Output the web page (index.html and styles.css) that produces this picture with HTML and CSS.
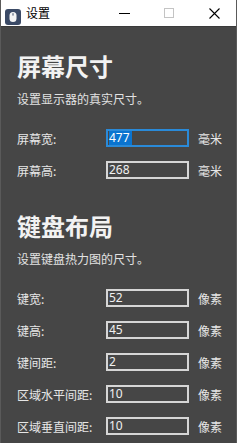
FILE: index.html
```html
<!DOCTYPE html>
<html lang="zh-CN">
<head>
    <meta charset="UTF-8">
    <meta name="viewport" content="width=device-width, initial-scale=1.0">
    <title>设置</title>
    <link rel="stylesheet" href="styles.css">
</head>
<body>
    <div class="window">
        <!-- title bar -->
        <div class="titlebar">
            <div class="app-icon">
                <svg width="16" height="16" viewBox="0 0 16 16">
                    <rect x="0" y="0" width="16" height="16" rx="3" fill="#3b4a66"/>
                    <rect x="4.5" y="3" width="7" height="10" rx="3.5" fill="#f4f4f4"/>
                    <line x1="8" y1="4.2" x2="8" y2="6.6" stroke="#3b4a66" stroke-width="1"/>
                </svg>
            </div>
            <div class="title-text">设置</div>
            <div class="caption-btns">
                <div class="cap minimize">
                    <svg width="11" height="11" viewBox="0 0 11 11"><line x1="0" y1="5.5" x2="11" y2="5.5" stroke="#000" stroke-width="1"/></svg>
                </div>
                <div class="cap maximize">
                    <svg width="11" height="11" viewBox="0 0 11 11"><rect x="0.5" y="0.5" width="9" height="9" fill="none" stroke="#c4c4c4" stroke-width="1"/></svg>
                </div>
                <div class="cap close">
                    <svg width="11" height="11" viewBox="0 0 11 11"><path d="M0.5 0.5 L10.5 10.5 M10.5 0.5 L0.5 10.5" stroke="#000" stroke-width="1.1"/></svg>
                </div>
            </div>
        </div>

        <div class="content">
            <div class="section">
                <div class="heading">屏幕尺寸</div>
                <div class="subtitle">设置显示器的真实尺寸。</div>
                <div class="rows">
                    <div class="row">
                        <div class="label">屏幕宽:</div>
                        <div class="field focused"><span class="sel">477</span></div>
                        <div class="unit">毫米</div>
                    </div>
                    <div class="row">
                        <div class="label">屏幕高:</div>
                        <div class="field">268</div>
                        <div class="unit">毫米</div>
                    </div>
                </div>
            </div>

            <div class="section">
                <div class="heading">键盘布局</div>
                <div class="subtitle">设置键盘热力图的尺寸。</div>
                <div class="rows">
                    <div class="row">
                        <div class="label">键宽:</div>
                        <div class="field">52</div>
                        <div class="unit">像素</div>
                    </div>
                    <div class="row">
                        <div class="label">键高:</div>
                        <div class="field">45</div>
                        <div class="unit">像素</div>
                    </div>
                    <div class="row">
                        <div class="label">键间距:</div>
                        <div class="field">2</div>
                        <div class="unit">像素</div>
                    </div>
                    <div class="row">
                        <div class="label">区域水平间距:</div>
                        <div class="field">10</div>
                        <div class="unit">像素</div>
                    </div>
                    <div class="row">
                        <div class="label">区域垂直间距:</div>
                        <div class="field">10</div>
                        <div class="unit">像素</div>
                    </div>
                </div>
            </div>
        </div>
    </div>
</body>
</html>
```

FILE: styles.css
```css
body {
    margin: 0;
    font-family: "Noto Sans CJK SC", "Noto Sans", sans-serif;
    background-color: #464646;
}

.window {
    width: 237px;
    height: 443px;
    box-sizing: border-box;
    border-left: 1px solid #5a5a5a;
    border-right: 1px solid #5a5a5a;
    background-color: #464646;
    overflow: hidden;
}

/* title bar */
.titlebar {
    height: 26px;
    background-color: #fff;
    display: flex;
    align-items: center;
    border-bottom: 1px solid #3a3a3a;
}

.app-icon {
    width: 16px;
    height: 16px;
    margin-left: 4px;
    margin-top: 1px;
}

.title-text {
    font-size: 12px;
    color: #000;
    margin-left: 5px;
    line-height: 16px;
}

.caption-btns {
    display: flex;
    margin-left: auto;
    height: 26px;
}

.cap {
    width: 45px;
    display: flex;
    align-items: center;
    justify-content: center;
}

.cap.minimize { width: 46px; }
.cap.close { width: 44px; }

/* content */
.content {
    padding: 23px 0 0 16px;
}

.section + .section {
    margin-top: 31px;
}

.heading {
    font-size: 24px;
    font-weight: bold;
    color: #f2f2f2;
    line-height: 32px;
}

.subtitle {
    font-size: 12px;
    color: #e2e2e2;
    line-height: 16px;
    margin-top: 9px;
}

.rows {
    margin-top: 22px;
    display: flex;
    flex-direction: column;
    gap: 14px;
}

.row {
    display: flex;
    align-items: center;
    height: 18px;
}

.label {
    width: 89px;
    font-size: 12px;
    color: #e6e6e6;
    white-space: nowrap;
}

.field {
    width: 83px;
    height: 18px;
    box-sizing: border-box;
    border: 2px solid #d6d6d6;
    padding-left: 1px;
    font-family: "Noto Sans", "Open Sans", sans-serif;
    font-size: 12px;
    line-height: 14px;
    color: #f0f0f0;
}

.field.focused {
    border-color: #2a8ad8;
}

.sel {
    background-color: #0a74d0;
    color: #fff;
    display: inline-block;
    padding-right: 2px;
    line-height: 14px;
}

.unit {
    margin-left: 9px;
    font-size: 12px;
    color: #e6e6e6;
}
```
